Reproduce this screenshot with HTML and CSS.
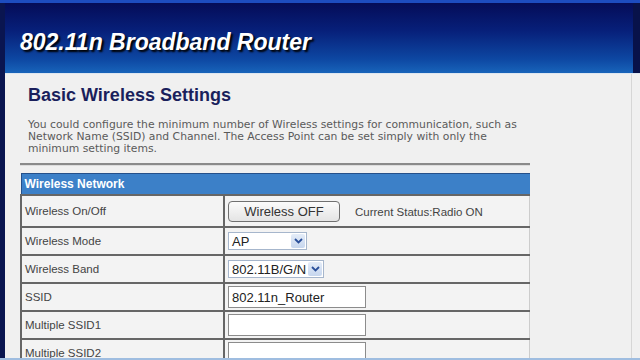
FILE: index.html
```html
<!DOCTYPE html>
<html>
<head>
	<meta charset="utf-8">
	<title>Basic Wireless Settings</title>
	<link rel="stylesheet" href="styles.css">
</head>
<body>
	<div class="frame">
		<div class="header">
			<h1 class="brand">802.11n Broadband Router</h1>
		</div>
		<div class="content">
			<div class="panel">
				<h2 class="title">Basic Wireless Settings</h2>
				<p class="desc">You could configure the minimum number of Wireless settings for communication, such as<br>Network Name (SSID) and Channel. The Access Point can be set simply with only the<br>minimum setting items.</p>
				<div class="rule"></div>
				<table class="settings">
					<tr><th colspan="2">Wireless Network</th></tr>
					<tr class="tall">
						<td class="label">Wireless On/Off</td>
						<td class="field"><button class="btn">Wireless OFF</button><span class="status">Current Status:Radio ON</span></td>
					</tr>
					<tr>
						<td class="label">Wireless Mode</td>
						<td class="field"><span class="select mode">AP<i class="arrow"><svg width="9" height="6" viewBox="0 0 9 6"><path d="M1 1l3.5 3.5L8 1" fill="none" stroke="#2a4f9a" stroke-width="1.8"/></svg></i></span></td>
					</tr>
					<tr>
						<td class="label">Wireless Band</td>
						<td class="field"><span class="select band">802.11B/G/N<i class="arrow"><svg width="9" height="6" viewBox="0 0 9 6"><path d="M1 1l3.5 3.5L8 1" fill="none" stroke="#2a4f9a" stroke-width="1.8"/></svg></i></span></td>
					</tr>
					<tr>
						<td class="label">SSID</td>
						<td class="field"><span class="input">802.11n_Router</span></td>
					</tr>
					<tr>
						<td class="label">Multiple SSID1</td>
						<td class="field"><span class="input"></span></td>
					</tr>
					<tr>
						<td class="label">Multiple SSID2</td>
						<td class="field"><span class="input"></span></td>
					</tr>
				</table>
			</div>
		</div>
		<div class="foot"></div>
	</div>
</body>
</html>
```

FILE: styles.css
```css
html, body{margin: 0; padding: 0; overflow: hidden;}
body{background: #0a1550; font-family: "Liberation Sans", Arial, sans-serif;}

.frame{height: 360px; display: flex; flex-direction: column;
		border-top: 3px solid #1d4cc0; box-sizing: border-box;}

.header{height: 70px; flex: none; margin-left: 5px;
		border-right: 7px solid #08124a;
		background: linear-gradient(#050c58 0%, #07207a 40%, #0d47a2 80%, #1864ba 100%);
		display: flex; align-items: center;}
.brand{margin: 0 0 0 15px; padding-top: 9px;
		font-size: 23px; font-style: italic; font-weight: bold; color: #fff;
		text-shadow: 2px 2px 2px #000;}

.content{flex: 1; margin-left: 5px; background: #f0f0f0; overflow: hidden;
		border-top: 1px solid #dde6f0;}
.panel{margin-right: 8px; height: 100%; border-right: 1px solid #d6d6d6;
		padding-left: 15px;}

.title{margin: 0; padding: 10px 0 0 8px; font-size: 18px; line-height: 22px;
		color: #1a1f5c;}
.desc{margin: 13px 0 0 8px; font-family: "DejaVu Sans", Verdana, sans-serif;
		font-size: 10.8px; line-height: 12px; color: #5a5a5a;}
.rule{width: 510px; margin-top: 8px; height: 2px; background: #8a8a8a;
		border-bottom: 1px solid #dcdcdc;}

.settings{margin-top: 7px; width: 510px; border-collapse: collapse;
		font-size: 11.5px; color: #444;}
.settings th{background: #3c80c8; color: #fff; text-align: left;
		height: 20px; padding: 0 3px; font-size: 12px;
		border-top: 1px solid #25508a; border-left: 1px solid #25508a;}
.settings td{height: 26px; padding: 0; border-top: 2px solid #666;
		border-left: 2px solid #666; border-right: 1px solid #ccc;
		background: #f3f3f3;}
.settings .tall td{height: 30px;}
.label{width: 198px; padding-left: 3px !important; padding-top: 1px;}
.field{padding-left: 3px !important;}

.btn{width: 112px; height: 21px; margin: 0 15px 0 0; padding: 0;
		font-family: "Liberation Sans", Arial, sans-serif; font-size: 13px; color: #333;
		background: linear-gradient(#fbfbfb, #e4e4e4);
		border: 1px solid #707070; border-radius: 4px;}
.status{font-size: 11.5px; color: #444;}

.select{display: inline-flex; align-items: center; justify-content: space-between;
		height: 18px; box-sizing: border-box; padding-left: 3px;
		border: 1px solid #a6b6cc; background: #fff;
		font-size: 13px; color: #222; vertical-align: middle;}
.mode{width: 79px;}
.band{width: 96px;}
.arrow{display: flex; align-items: center; justify-content: center;
		width: 14px; height: 14px; margin-right: 1px;
		background: linear-gradient(#e4ecf8, #c6d6ee); border-radius: 2px;}

.input{display: inline-block; width: 138px; height: 22px; box-sizing: border-box;
		padding: 3px 0 0 3px; border: 1px solid #8c8c8c; background: #fff;
		font-size: 13px; color: #222; vertical-align: middle;}

.foot{height: 2px; flex: none; background: #9fbde0;}
```
